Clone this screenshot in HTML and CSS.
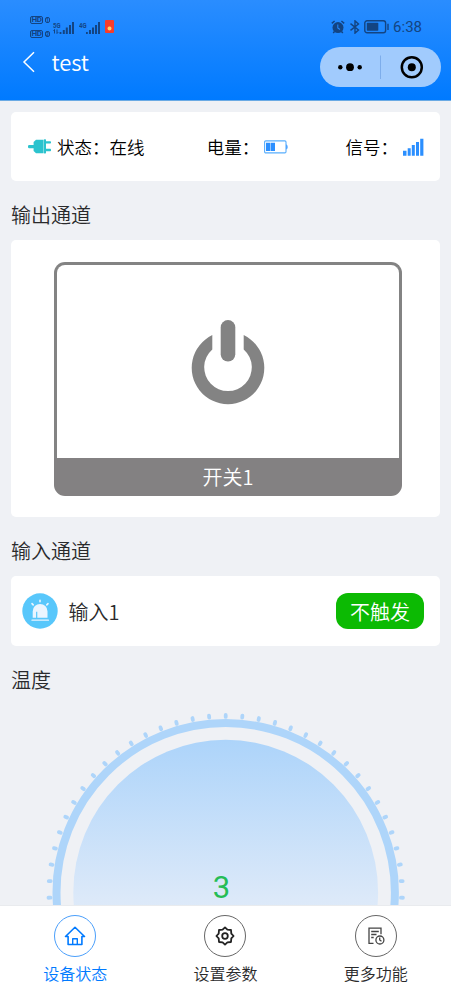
FILE: index.html
```html
<!DOCTYPE html>
<html lang="zh-CN">
<head>
<meta charset="utf-8">
<title>test</title>
<link rel="stylesheet" href="styles.css">
</head>
<body>
<div class="app">
  <header class="header">
    <div class="statusbar">
      <div class="status-left">
        <div class="hd-stack">
          <div class="hd-row"><span class="hd">HD</span><span class="sim">1</span></div>
          <div class="hd-row"><span class="hd">HD</span><span class="sim">2</span></div>
        </div>
        <svg class="cell" width="22" height="16" viewBox="0 0 22 16" fill="currentColor">
          <text class="cell-text" x="0" y="6.5" textLength="7.5" lengthAdjust="spacingAndGlyphs">5G</text>
          <path d="M1.5 8.5v4M.5 9.8l1-1.3M4 8.5v4M4 12.5l1.2-1.3" fill="none" stroke="currentColor" stroke-width="1"/>
          <path d="M6.6 11h1.8v2H6.6zM9.8 9h2v4h-2zM12.8 6.5h2V13h-2zM16 4h2v9h-2zM19 1h2v12h-2z"/>
        </svg>
        <svg class="cell" width="22" height="16" viewBox="0 0 22 16" fill="currentColor">
          <text class="cell-text" x="0" y="6.5" textLength="7.5" lengthAdjust="spacingAndGlyphs">4G</text>
          <path d="M7 11h1.8v2H7zM10 9h2v4h-2zM13 6.5h2V13h-2zM16 4h2v9h-2zM19 1h2v12h-2z"/>
        </svg>
        <span class="packet"></span>
      </div>
      <div class="status-right">
        <svg width="14" height="14" viewBox="0 0 14 14">
          <circle cx="7" cy="7.6" r="5.5" fill="currentColor"/>
          <path d="M.8 3.3 3.6 1M13.2 3.3 10.4 1M3.5 11.5l-1.3 1.5M10.5 11.5l1.3 1.5" stroke="currentColor" stroke-width="1.5" fill="none"/>
          <path d="M6.8 4.5v3.4l2.2 1.6" stroke="#2385f8" stroke-width="1.1" fill="none"/>
        </svg>
        <svg width="12" height="14" viewBox="0 0 12 14" fill="none" stroke="currentColor" stroke-width="1.4">
          <path d="M1.5 3.6 9.5 10 6 13.1V.9L9.5 4 1.5 10.4"/>
        </svg>
        <svg width="26" height="14" viewBox="0 0 26 14">
          <rect x=".8" y=".8" width="20.8" height="12" rx="2.3" fill="none" stroke="currentColor" stroke-width="1.4"/>
          <rect x="2.8" y="2.8" width="11.5" height="8" rx=".8" fill="currentColor"/>
          <path d="M24 3.7v6.2" stroke="currentColor" stroke-width="1.4"/>
        </svg>
        <span class="clock">6:38</span>
      </div>
    </div>
    <div class="navbar">
      <svg class="back" width="14" height="22" viewBox="0 0 14 22" fill="none" stroke="#fff" stroke-width="1.5"><path d="M12 1.2 2 11l10 9.8"/></svg>
      <span class="title">test</span>
      <div class="capsule">
        <svg width="121" height="40" viewBox="0 0 121 40">
          <circle cx="20.3" cy="20.2" r="2.2"/><circle cx="30" cy="20.2" r="3.9"/><circle cx="39.7" cy="20.2" r="2.2"/>
          <path d="M60.5 8.5v23.5" stroke="#7dadeb" stroke-width="1"/>
          <circle cx="91.8" cy="20.3" r="10" fill="none" stroke="#000" stroke-width="2.5"/><circle cx="91.8" cy="20.3" r="4"/>
        </svg>
      </div>
    </div>
  </header>

  <main class="content">
    <section class="card info">
      <div class="info-item">
        <svg class="plug" width="24" height="15" viewBox="0 0 24 15" fill="#2cc3ce">
          <rect x="0" y="6" width="8" height="3.2" rx="1.2"/>
          <path d="M8 .8h7.5v13.4H8L5.6 12V3z"/><rect x="15.8" y=".3" width="2.2" height="14.2" rx=".7"/>
          <rect x="17" y="2.2" width="6" height="2.4" rx=".8"/><rect x="17" y="9.8" width="6" height="2.4" rx=".8"/>
        </svg>
        <span>状态：在线</span>
      </div>
      <div class="info-item">
        <span>电量：</span>
        <svg class="battery" width="24" height="14" viewBox="0 0 24 14">
          <rect x=".6" y=".9" width="21.4" height="12" rx="1.2" fill="none" stroke="#58aefd" stroke-width="1.1"/>
          <path d="M22.3 4.2q1.3.5 1.3 2.7t-1.3 2.7z" fill="#2b8fff"/>
          <path d="M2 2.8h4.2v8.3H2zM6.7 2.8H11v8.3H6.7z" fill="#2b8fff"/>
        </svg>
      </div>
      <div class="info-item">
        <span>信号：</span>
        <svg class="signal" width="22" height="18" viewBox="0 0 22 18" fill="#2b8fff">
          <path d="M0 12.7h3.5v5H0zM4.7 10.2h3v7.5h-3zM8.8 7h3v10.7h-3zM13 4h3v13.7h-3zM17.2.7h3.2v17h-3.2z"/>
        </svg>
      </div>
    </section>

    <h2 class="heading">输出通道</h2>
    <section class="card output">
      <div class="switch">
        <div class="switch-face">
          <svg width="74" height="86" viewBox="0 0 74 86" fill="none" stroke="#838383">
            <path d="M21.3 16.1A36.3 36.3 0 1 0 52.7 16.1V30.4A23.8 23.8 0 1 1 21.3 30.4Z" fill="#838383" stroke="none"/>
            <path d="M37 8.3v27" stroke-width="14.6" stroke-linecap="round"/>
          </svg>
        </div>
        <div class="switch-label">开关1</div>
      </div>
    </section>

    <h2 class="heading">输入通道</h2>
    <section class="card input">
      <svg class="alarm" width="36" height="36" viewBox="0 0 36 36">
        <circle cx="18" cy="18" r="17.7" fill="#58c7fb"/>
        <path d="M10.7 24.7V18.3a7.4 7.4 0 0 1 14.8 0v6.4H15.3v-6h-1.2v6z" fill="#eaf5ff"/>
        <path d="M10 27.2h16.4" stroke="#eaf5ff" stroke-width="1.3" stroke-linecap="round"/>
        <path d="M18 7.2v1.6M10 10.6l1.2 1.3M26 10.6l-1.2 1.3" stroke="#eaf5ff" stroke-width="1.6" stroke-linecap="round"/>
      </svg>
      <span class="input-name">输入1</span>
      <span class="tag">不触发</span>
    </section>

    <h2 class="heading">温度</h2>
    <svg class="gauge" width="360" height="194" viewBox="0 0 360 194">
      <defs>
        <linearGradient id="fill" gradientUnits="userSpaceOnUse" x1="0" y1="30" x2="0" y2="334">
          <stop offset="0" stop-color="#add4fa"/><stop offset=".52" stop-color="#dce9f9"/><stop offset="1" stop-color="#eff1f5"/>
        </linearGradient>
      </defs>
      <g id="ticks" stroke="#aed5fa" stroke-width="3.8" stroke-linecap="round"></g>
      <circle cx="179.7" cy="181.2" r="169.2" fill="none" stroke="#aed5fa" stroke-width="8"/>
      <circle cx="179.7" cy="181.2" r="152.4" fill="url(#fill)"/>
      <text class="reading" x="175.5" y="187" text-anchor="middle">3</text>
    </svg>
  </main>

  <nav class="tabs">
    <div class="tab active">
      <span class="tab-icon"><svg width="22" height="22" viewBox="0 0 22 22" fill="none" stroke="currentColor" stroke-width="1.6" stroke-linejoin="round">
        <path d="M1.5 11.5 11 2.3l9.5 9.2h-2.6v8H4.1v-8z"/><path d="M8.7 19.3v-5.6h4.6v5.6" stroke-width="1.4"/>
      </svg></span>
      <span>设备状态</span>
    </div>
    <div class="tab">
      <span class="tab-icon"><svg width="20" height="20" viewBox="0 0 20 20" fill="none" stroke="currentColor" stroke-width="1.8" stroke-linejoin="round">
        <path d="M10 1.4 12.4 3.7 16 4l.3 3.6L18.6 10l-2.3 2.4L16 16l-3.6.3L10 18.6l-2.4-2.3L4 16l-.3-3.6L1.4 10l2.3-2.4L4 4l3.6-.3z"/><circle cx="10" cy="10" r="2.8"/>
      </svg></span>
      <span>设置参数</span>
    </div>
    <div class="tab">
      <span class="tab-icon"><svg width="18" height="18" viewBox="0 0 18 18" fill="none" stroke="#444" stroke-width="1.3">
        <path d="M6.5 16.3H2V1.2h12v6"/><path d="M4.2 4.5h7.6M4.2 7.5h5.3M4.2 10.5h2.5"/><circle cx="12.9" cy="13" r="4"/><path d="M12.7 10.6V13l1.8 1.2"/>
      </svg></span>
      <span>更多功能</span>
    </div>
  </nav>
</div>
<script src="gauge.js"></script>
</body>
</html>
```
FILE: styles.css
```css
* { box-sizing: border-box; }

html { background: #fff; }

body {
  margin: 0;
  font-family: "Noto Sans CJK SC", "Noto Sans", sans-serif;
  font-weight: 350;
  color: #2a2a2c;
}

.app {
  width: 451px;
  height: 993px;
  display: flex;
  flex-direction: column;
  overflow: hidden;
  background: #eff1f5;
}

.header {
  height: 101px;
  flex: none;
  padding-top: 14px;
  background: linear-gradient(#2a8dff, #007aff);
  border-bottom: 1px solid #6aaae4;
}

.statusbar {
  height: 26px;
  display: flex;
  justify-content: space-between;
  align-items: center;
  padding: 0 29px 0 30px;
  color: #134482;
}

.status-left, .status-right { display: flex; align-items: center; }

.hd-stack { display: flex; flex-direction: column; gap: 6px; width: 23px; }
.hd-row { display: flex; align-items: center; gap: 2px; height: 8px; }

.hd, .sim {
  border: 1px solid #134482;
  border-radius: 2px;
  font: bold 8px/6px Roboto, sans-serif;
  height: 8px;
  text-align: center;
}

.hd { width: 13px; letter-spacing: -.3px; }
.sim { width: 4.5px; height: 6px; font-size: 5px; line-height: 4px; }
.cell { margin-right: 3.5px; margin-top: 4px; }
.cell-text { font: bold 7.5px Roboto, sans-serif; }

.packet {
  width: 9px;
  height: 13px;
  margin: -1px 0 0 1px;
  border-radius: 1px;
  background: radial-gradient(circle at 50% 65%, #ffd16b 1.5px, #f63d2b 2.4px);
}

.status-right svg:nth-child(1) { margin-right: 4px; }
.status-right svg:nth-child(2) { margin-right: 3px; }
.clock { font: 15px/18px Roboto, sans-serif; margin-left: 3px; }

.navbar {
  height: 46px;
  display: flex;
  align-items: center;
  padding: 0 10px 0 22px;
  color: #fff;
}

.back { margin-top: -3px; }
.title { margin: -4px 0 0 15.5px; font-size: 22px; line-height: 30px; letter-spacing: -.1px; }

.capsule {
  width: 121px;
  height: 40px;
  margin: 8px 0 0 auto;
  border-radius: 20px;
  background: #a1cbfd;
}

.capsule svg { display: block; }

.content {
  flex: 1;
  min-height: 0;
  overflow: hidden;
  padding: 11px 11px 0;
}

.card { background: #fff; border-radius: 5px; }

.info {
  height: 69px;
  display: flex;
  justify-content: space-between;
  align-items: center;
  padding: 0 15px 0 17px;
  color: #000;
  font-size: 17.5px;
  line-height: 26px;
}

.info-item { display: flex; align-items: center; }
.plug { margin-right: 5px; }
.info-item:nth-child(2) { margin-left: 5px; }
.battery { margin-left: 5px; }
.signal { margin-left: 5px; }

.heading {
  margin: 0;
  height: 59px;
  font-size: 20px;
  font-weight: 350;
  line-height: 68px;
}

.output { height: 277px; padding: 22px 38px 21px 43px; }

.switch {
  height: 234px;
  display: flex;
  flex-direction: column;
}

.switch-face {
  flex: 1;
  display: flex;
  align-items: center;
  justify-content: center;
  border: 3px solid #838383;
  border-bottom: 0;
  border-radius: 11px 11px 0 0;
}

.switch-label {
  height: 38px;
  border-radius: 0 0 11px 11px;
  background: #838182;
  color: #fff;
  font-size: 20px;
  line-height: 37px;
  text-align: center;
}

.input {
  height: 70px;
  display: flex;
  align-items: center;
  padding: 0 16px 0 11px;
}

.input-name { margin: 2px 0 0 10.5px; font-size: 20px; line-height: 30px; }

.tag {
  width: 88px;
  height: 36px;
  margin-left: auto;
  border-radius: 12px;
  background: #0cba03;
  color: #fff;
  font-size: 20px;
  line-height: 38px;
  text-align: center;
}

.gauge { display: block; margin: 6px 0 0 35px; }
.reading { font: 31px Roboto, sans-serif; fill: #25bd56; }

.tabs {
  height: 88px;
  flex: none;
  display: flex;
  background: #fff;
  border-top: 1px solid #e9ebee;
}

.tab {
  flex: 1;
  display: flex;
  flex-direction: column;
  align-items: center;
  padding-top: 9px;
  font-size: 16px;
  line-height: 24px;
}

.tab-icon {
  width: 42px;
  height: 42px;
  margin-bottom: 4px;
  display: flex;
  align-items: center;
  justify-content: center;
  border: 1px solid #666;
  border-radius: 50%;
  color: #222;
}

.active, .active .tab-icon { color: #007aff; }
.active .tab-icon { border-color: #4b9ffb; }
```
FILE: gauge.js
```js
const ticks = document.getElementById("ticks");
for (let i = -17; i <= 17; i++) {
  const line = document.createElementNS("http://www.w3.org/2000/svg", "line");
  line.setAttribute("x1", 179.7);
  line.setAttribute("x2", 179.7);
  line.setAttribute("y1", 3.9);
  line.setAttribute("y2", 5.9);
  line.setAttribute("transform", `rotate(${i * 5.4} 179.7 181.2)`);
  ticks.appendChild(line);
}
```
